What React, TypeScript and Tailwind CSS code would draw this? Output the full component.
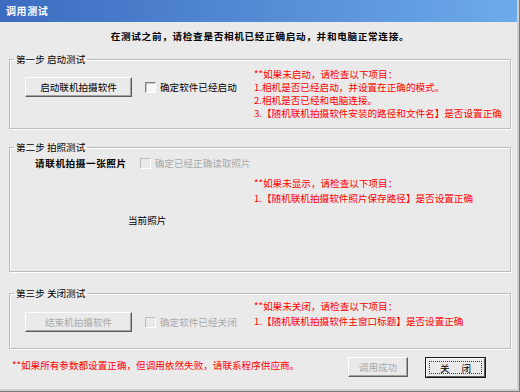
import React from 'react';

const Btn: React.FC<{ disabled?: boolean; className?: string; children: React.ReactNode }> = ({ disabled, className = '', children }) => (
  <div
    className={`flex items-center justify-center border border-t-white border-l-white border-r-[#5c5c5c] border-b-[#5c5c5c] shadow-[inset_-1px_-1px_0_#a3a3a3] ${
      disabled ? 'text-[#a9a9a9]' : 'text-black'
    } ${className}`}
  >
    {children}
  </div>
);

const Check: React.FC<{ disabled?: boolean }> = ({ disabled }) => (
  <span
    className={`block w-[11px] h-[11px] shrink-0 border ${
      disabled
        ? 'border-t-[#bdbdbd] border-l-[#bdbdbd] border-r-white border-b-white bg-[#ebeaeb]'
        : 'border-t-[#7d7d7d] border-l-[#7d7d7d] border-r-white border-b-white bg-[#f7f7f7] shadow-[inset_1px_1px_0_#c9c9c9]'
    }`}
  />
);

const Group: React.FC<{ title: string; className?: string; children: React.ReactNode }> = ({ title, className = '', children }) => (
  <fieldset
    className={`ml-[9px] w-[502px] border border-[#bdbcbd] shadow-[1px_1px_0_white,inset_1px_1px_0_white] ${className}`}
  >
    <legend className="ml-[4px] px-[2px] leading-[12px]">{title}</legend>
    {children}
  </fieldset>
);

export default function App() {
  return (
    <div className="w-[520px] h-[392px] bg-[#ebeaeb] text-[9.6px] leading-[12px] text-black font-['SimSun','Noto_Sans_CJK_SC',sans-serif] shadow-[inset_-1px_-1px_0_#7a7a7a,inset_-3px_-3px_0_#cfcfcf] flex flex-col overflow-hidden">
      {/* Title bar */}
      <div className="h-[22px] mr-[3px] bg-gradient-to-r from-[#3c6cc0] to-[#6eaaea] flex items-center pl-[6px]">
        <span className="text-white font-bold text-[10px] tracking-[0.6px]">调用测试</span>
      </div>

      <div className="pt-[8px] text-center font-bold tracking-[0.7px]">
        在测试之前，请检查是否相机已经正确启动，并和电脑正常连接。
      </div>

      {/* Step 1 */}
      <Group title="第一步 启动测试" className="mt-[11px] h-[76px]">
        <div className="flex">
          <div className="w-[244px] flex items-start pl-[15px] pt-[12px]">
            <Btn className="w-[107px] h-[20px]">启动联机拍摄软件</Btn>
            <div className="flex items-center h-[20px] ml-[13px]">
              <Check />
              <span className="ml-[4px]">确定软件已经启动</span>
            </div>
          </div>
          <div className="pt-[3px] leading-[13px] text-[#ff0000]">
            <div>**如果未启动，请检查以下项目：</div>
            <div>1.相机是否已经启动，并设置在正确的模式。</div>
            <div>2.相机是否已经和电脑连接。</div>
            <div>3.【随机联机拍摄软件安装的路径和文件名】是否设置正确</div>
          </div>
        </div>
      </Group>

      {/* Step 2 */}
      <Group title="第二步 拍照测试" className="mt-[12px] h-[131px]">
        <div className="flex">
          <div className="w-[244px] pl-[25px] pt-[4px]">
            <div className="flex items-center">
              <span className="font-bold tracking-[0.6px]">请联机拍摄一张照片</span>
              <span className="ml-[13px]">
                <Check disabled />
              </span>
              <span className="ml-[4px] text-[#a9a9a9]">确定已经正确读取照片</span>
            </div>
            <div className="mt-[45px] pl-[93px]">当前照片</div>
          </div>
          <div className="pt-[23px] leading-[15px] text-[#ff0000]">
            <div>**如果未显示，请检查以下项目：</div>
            <div>1.【随机联机拍摄软件照片保存路径】是否设置正确</div>
          </div>
        </div>
      </Group>

      {/* Step 3 */}
      <Group title="第三步 关闭测试" className="mt-[15px] h-[62px]">
        <div className="flex">
          <div className="w-[244px] flex items-start pl-[15px] pt-[13px]">
            <Btn disabled className="w-[107px] h-[20px]">结束机拍摄软件</Btn>
            <div className="flex items-center h-[20px] ml-[13px]">
              <Check disabled />
              <span className="ml-[4px] text-[#a9a9a9]">确定软件已经关闭</span>
            </div>
          </div>
          <div className="leading-[15px] text-[#ff0000]">
            <div>**如果未关闭，请检查以下项目：</div>
            <div>1.【随机联机拍摄软件主窗口标题】是否设置正确</div>
          </div>
        </div>
      </Group>

      {/* Bottom row */}
      <div className="mt-[8px] flex items-start pl-[12px]">
        <div className="w-[336px] pt-[2px] text-[#ff0000]">**如果所有参数都设置正确，但调用依然失败，请联系程序供应商。</div>
        <Btn disabled className="w-[60px] h-[20px]">调用成功</Btn>
        <div className="ml-[17px] w-[61px] h-[21px] border border-[#1a1a1a]">
          <div className="h-full border border-t-white border-l-white border-r-[#5c5c5c] border-b-[#5c5c5c] p-[2px]">
            <div className="h-full border border-dotted border-[#3a3a3a] flex items-center justify-center gap-[12px]">
              <span>关</span>
              <span>闭</span>
            </div>
          </div>
        </div>
      </div>
    </div>
  );
}
